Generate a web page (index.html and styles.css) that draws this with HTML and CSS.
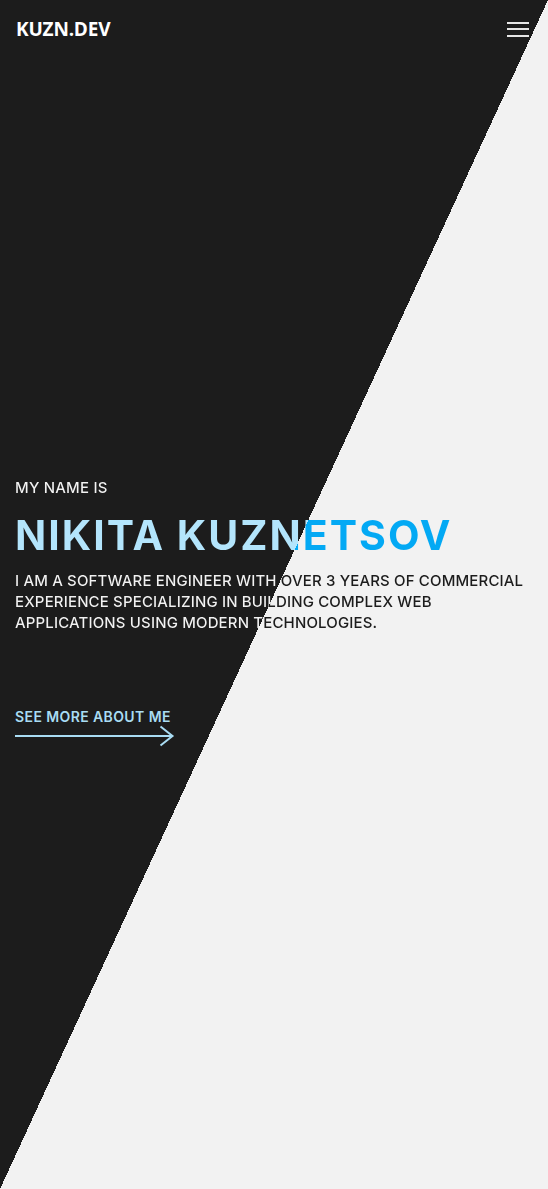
FILE: index.html
```html
<!DOCTYPE html>
<html lang="en">
<head>
<meta charset="utf-8">
<title>kuzn.dev</title>
<link rel="stylesheet" href="styles.css">
</head>
<body>
<header class="header">
  <a class="logo" href="#">KUZN.DEV</a>
  <button class="burger" aria-label="Menu">
    <span></span><span></span><span></span>
  </button>
</header>
<main class="hero">
  <p class="intro split">MY NAME IS</p>
  <h1 class="name">NIKITA KUZNETSOV</h1>
  <p class="about split">I AM A SOFTWARE ENGINEER WITH OVER 3 YEARS OF COMMERCIAL EXPERIENCE SPECIALIZING IN BUILDING COMPLEX WEB APPLICATIONS USING MODERN TECHNOLOGIES.</p>
  <a class="more" href="#">
    <span class="more-text">SEE MORE ABOUT ME</span>
    <svg class="arrow" width="160" height="22" viewBox="0 0 160 22" fill="none" stroke="#a9dcf3" stroke-width="2">
      <path d="M0 11 H157.5"/>
      <path d="M145.5 1.5 L157.5 11 L145.5 20.5"/>
    </svg>
  </a>
</main>
</body>
</html>
```

FILE: styles.css
```css
* { box-sizing: border-box; }
html, body { margin: 0; padding: 0; }
body {
  min-height: 100vh;
  font-family: "Inter", "DejaVu Sans", sans-serif;
  background: linear-gradient(to bottom right, #1c1c1c 50%, #f2f2f2 50%) fixed;
  color: #f2f2f2;
  display: flex;
  flex-direction: column;
}
.header {
  display: flex;
  justify-content: space-between;
  align-items: center;
  padding: 16px 19px 0 16px;
}
.logo {
  font-family: "Open Sans", sans-serif;
  font-weight: 700;
  font-size: 19px;
  color: #ffffff;
  text-decoration: none;
  letter-spacing: -0.2px;
}
.burger {
  display: flex;
  flex-direction: column;
  gap: 4.5px;
  width: 22px;
  padding: 0;
  background: none;
  border: 0;
}
.burger span {
  display: block;
  height: 2px;
  background: #e6e6e6;
}
.hero {
  padding: 0 15px;
  margin-top: 436px;
}
.split {
  background: linear-gradient(to bottom right, #f2f2f2 50%, #1c1c1c 50%) fixed;
  -webkit-background-clip: text;
  background-clip: text;
  color: transparent;
}
.intro {
  margin: 0;
  font-size: 15px;
  font-weight: 500;
  letter-spacing: 0.2px;
}
.name {
  margin: 13px 0 0;
  font-size: 41px;
  font-weight: 700;
  letter-spacing: 2px;
  line-height: 50px;
  background: linear-gradient(to bottom right, #b3e5fc 50%, #03a9f4 50%) fixed;
  -webkit-background-clip: text;
  background-clip: text;
  color: transparent;
}
.about {
  margin: 10px 0 0;
  font-size: 15px;
  font-weight: 500;
  line-height: 21px;
  letter-spacing: 0.15px;
}
.more {
  display: inline-flex;
  flex-direction: column;
  margin-top: 75px;
  text-decoration: none;
  color: #a9dcf3;
}
.more-text {
  font-size: 14px;
  font-weight: 600;
  letter-spacing: 0.4px;
}
.arrow {
  display: block;
  margin-top: 0;
}
```
